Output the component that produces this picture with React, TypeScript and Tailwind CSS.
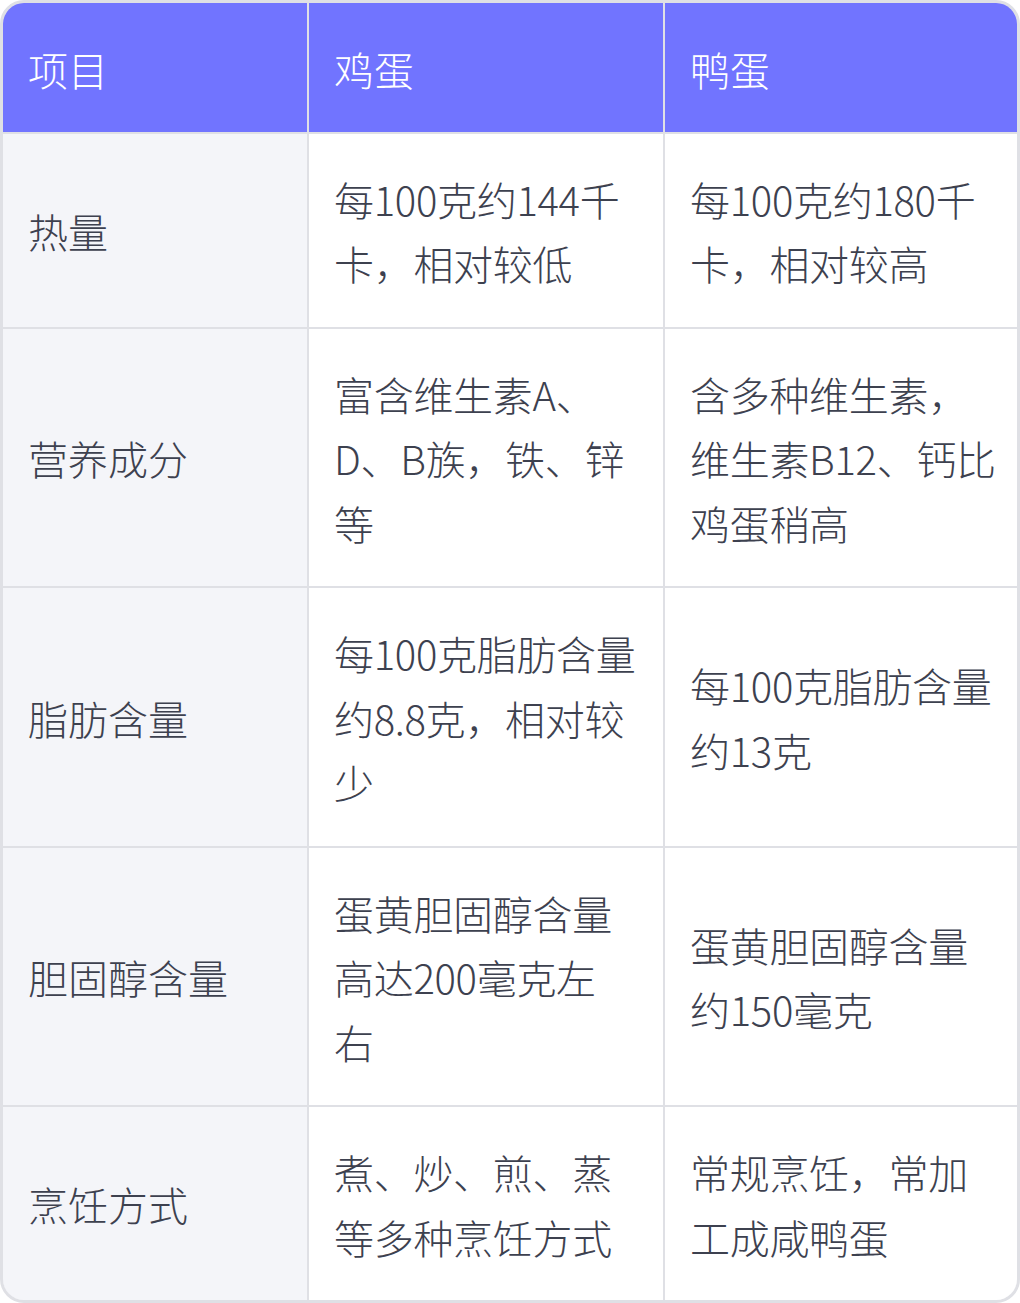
import React from "react";

const rows: [string, string[], string[]][] = [
  ["热量", ["每100克约144千", "卡，相对较低"], ["每100克约180千", "卡，相对较高"]],
  ["营养成分", ["富含维生素A、", "D、B族，铁、锌", "等"], ["含多种维生素，", "维生素B12、钙比", "鸡蛋稍高"]],
  ["脂肪含量", ["每100克脂肪含量", "约8.8克，相对较", "少"], ["每100克脂肪含量", "约13克"]],
  ["胆固醇含量", ["蛋黄胆固醇含量", "高达200毫克左", "右"], ["蛋黄胆固醇含量", "约150毫克"]],
  ["烹饪方式", ["煮、炒、煎、蒸", "等多种烹饪方式"], ["常规烹饪，常加", "工成咸鸭蛋"]],
];

function Lines({ lines }: { lines: string[] }) {
  return (
    <div>
      {lines.map((l, i) => (
        <div key={i} className="whitespace-nowrap">
          {l}
        </div>
      ))}
    </div>
  );
}

export default function App() {
  return (
    <div
      className="w-[1020px] bg-white"
      style={{ fontFamily: '"Noto Sans CJK SC", "Noto Sans", sans-serif' }}
    >
      <div className="rounded-[24px] border-[3px] border-[#dfe0e5] overflow-hidden">
        <div className="grid grid-cols-[304px_354px_352px] gap-[2px] bg-[#dfe0e5]">
          {["项目", "鸡蛋", "鸭蛋"].map((h) => (
            <div
              key={h}
              className="flex items-center bg-[#7174ff] px-[25px] pt-[34px] pb-[30px] text-[40px] leading-[64.5px] font-light text-white"
            >
              {h}
            </div>
          ))}
          {rows.map((r) => (
            <React.Fragment key={r[0]}>
              <div className="flex items-center bg-[#f4f5f9] px-[25px] pt-[33px] pb-[31px] text-[40px] leading-[64.5px] font-light text-[#3d414f]">
                {r[0]}
              </div>
              <div className="flex items-center bg-white px-[25px] pt-[33px] pb-[31px] text-[40px] leading-[64.5px] font-light text-[#3d414f] tracking-[-0.3px]">
                <Lines lines={r[1]} />
              </div>
              <div className="flex items-center bg-white px-[25px] pt-[33px] pb-[31px] text-[40px] leading-[64.5px] font-light text-[#3d414f] tracking-[-0.3px]">
                <Lines lines={r[2]} />
              </div>
            </React.Fragment>
          ))}
        </div>
      </div>
    </div>
  );
}
